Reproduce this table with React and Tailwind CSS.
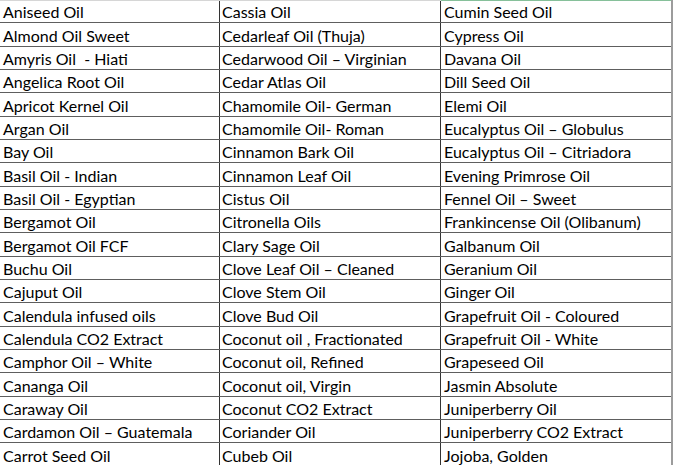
const col1 = ["Aniseed Oil","Almond Oil Sweet","Amyris Oil  - Hiati","Angelica Root Oil","Apricot Kernel Oil","Argan Oil","Bay Oil","Basil Oil - Indian","Basil Oil - Egyptian","Bergamot Oil","Bergamot Oil FCF","Buchu Oil","Cajuput Oil","Calendula infused oils","Calendula CO2 Extract","Camphor Oil – White","Cananga Oil","Caraway Oil","Cardamon Oil – Guatemala","Carrot Seed Oil"];
const col2 = ["Cassia Oil","Cedarleaf Oil (Thuja)","Cedarwood Oil – Virginian","Cedar Atlas Oil","Chamomile Oil- German","Chamomile Oil- Roman","Cinnamon Bark Oil","Cinnamon Leaf Oil","Cistus Oil","Citronella Oils","Clary Sage Oil","Clove Leaf Oil – Cleaned","Clove Stem Oil","Clove Bud Oil","Coconut oil , Fractionated","Coconut oil, Refined","Coconut oil, Virgin","Coconut CO2 Extract","Coriander Oil","Cubeb Oil"];
const col3 = ["Cumin Seed Oil","Cypress Oil","Davana Oil","Dill Seed Oil","Elemi Oil","Eucalyptus Oil – Globulus","Eucalyptus Oil – Citriadora","Evening Primrose Oil","Fennel Oil – Sweet","Frankincense Oil (Olibanum)","Galbanum Oil","Geranium Oil","Ginger Oil","Grapefruit Oil - Coloured","Grapefruit Oil - White","Grapeseed Oil","Jasmin Absolute","Juniperberry Oil","Juniperberry CO2 Extract","Jojoba, Golden"];

export default function App() {
  return (
    <div className="w-[673px] h-[465px] overflow-hidden bg-white text-black" style={{ fontFamily: "Lato, 'Noto Sans', sans-serif" }}>
      <div className="w-[673px] border-r-2 border-[#9c9c9c]">
        {col1.map((c, i) => (
          <div key={i} className={"flex h-[23.33px] border-b border-[#5e5e5e] text-[16px] " + (i === 0 ? "border-t border-t-[#d6d6d6]" : "")}>
            <div className="w-[220px] shrink-0 border-r border-[#333] pl-[3px] flex items-end whitespace-pre leading-[20px]">{c}</div>
            <div className="w-[221px] shrink-0 border-r border-[#333] pl-[2px] flex items-end whitespace-pre leading-[20px]">{col2[i]}</div>
            <div className={"flex-1 pl-[3px] flex items-end whitespace-pre leading-[20px] " + (i === 0 ? "border-t border-t-[#86c09a] -mt-px" : "")}>{col3[i]}</div>
          </div>
        ))}
      </div>
    </div>
  );
}
